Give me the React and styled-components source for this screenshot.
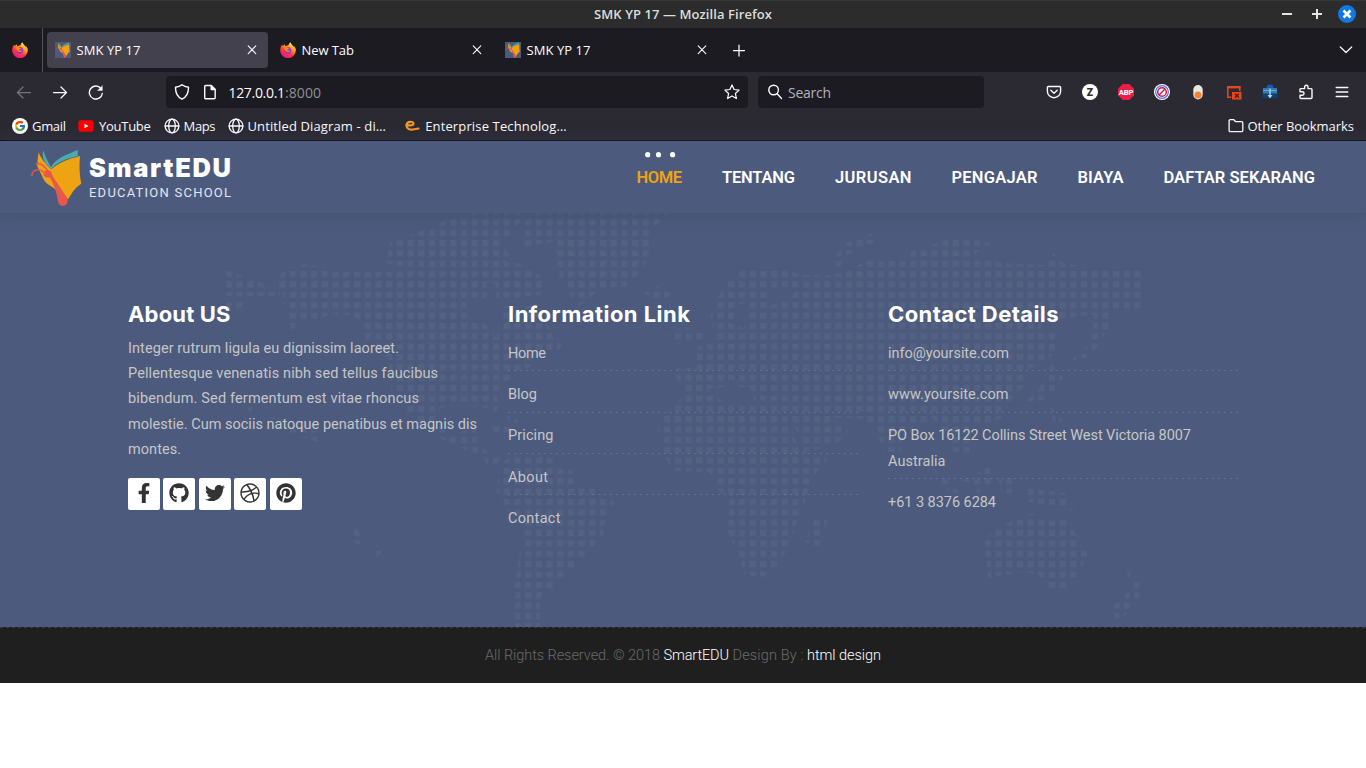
import React, { useLayoutEffect, useRef, useState } from "react";
import styled, { createGlobalStyle, css } from "styled-components";
import { FaFacebookF, FaGithub, FaTwitter, FaDribbble, FaPinterest } from "react-icons/fa";
import { FcGoogle } from "react-icons/fc";

const GlobalStyle = createGlobalStyle`
  * { box-sizing: border-box; }
  html, body { margin: 0; height: 100%; background: #fff; overflow: hidden; }
  svg { display: block; flex: none; }
`;

const uiFont = `"Open Sans", "Noto Sans", sans-serif`;
const siteFont = `Roboto, "Liberation Sans", sans-serif`;
const displayFont = `Inter, Roboto, sans-serif`;
const navy = "#4c5a7d";

/* Text tracked so that it fills a given measure */
const Measure = styled.span`
  display: inline-block;
  flex: none;
  width: ${(p) => p.$w}px;
  white-space: pre;
  ${(p) => p.$color && css`color: ${p.$color};`}
`;

function Fit({ w, color, children }) {
  const ref = useRef(null);
  const [spacing, setSpacing] = useState(0);
  useLayoutEffect(() => {
    const natural = ref.current.getBoundingClientRect().width;
    setSpacing((w - natural) / Math.max(1, children.length - 1));
  }, [w, children]);
  return (
    <Measure $w={w} $color={color}>
      <span ref={ref} style={{ letterSpacing: spacing }}>{children}</span>
    </Measure>
  );
}

/* ---------- window chrome ---------- */
const Window = styled.div`
  width: 1366px;
  height: 768px;
  display: flex;
  flex-direction: column;
  background: #fff;
`;

const TitleBar = styled.div`
  height: 28px;
  display: grid;
  grid-template-columns: 1fr auto 1fr;
  align-items: start;
  padding-top: 4px;
  background: #2c2c2c;
  border-top: 1px solid #383838;
  font: 600 13px/18px ${uiFont};
  color: #dcdcdc;
`;

const WindowButtons = styled.div`
  justify-self: end;
  display: flex;
  gap: 12px;
  padding-right: 10px;
`;

const TabStrip = styled.div`
  height: 44px;
  display: flex;
  align-items: center;
  background: #1c1b22;
  font: 13px/18px ${uiFont};
  color: #fbfbfe;
`;

const PinnedTab = styled.div`
  width: 43px;
  height: 44px;
  padding: 14px 0 0 12px;
  border-right: 1px solid #54535c;
  margin-right: 4px;
`;

const Tab = styled.div`
  width: 221px;
  height: 36px;
  margin-right: 4px;
  padding: 0 8px;
  display: flex;
  align-items: center;
  gap: 5.5px;
  border-radius: 4px;
  background: ${(p) => (p.$active ? "#42414d" : "transparent")};
  & > :last-child { margin-left: auto; }
`;

const StripButton = styled.div`
  display: flex;
  margin-left: ${(p) => p.$ml || "0"};
  margin-right: ${(p) => p.$mr || "0"};
`;

const NavBar = styled.div`
  height: 40px;
  display: flex;
  align-items: center;
  background: #2b2a33;
  padding-left: 16px;
  font: 14px/20px ${uiFont};
`;

const NavButtons = styled.div`
  display: flex;
  gap: 20px;
  width: 150px;
`;

const Field = styled.div`
  height: 32px;
  width: ${(p) => p.$w}px;
  margin-right: 10px;
  padding: 0 8px;
  display: flex;
  align-items: center;
  border-radius: 4px;
  background: #1c1b22;
  color: #fbfbfe;
`;

const FieldText = styled.div`
  display: flex;
  padding-top: 2px;
`;

const FieldIcon = styled.div`
  margin-right: ${(p) => p.$mr}px;
`;

const FieldEnd = styled.div`
  margin-left: auto;
`;

const Extensions = styled.div`
  display: flex;
  gap: 20px;
  margin-left: auto;
  padding-right: 16px;
`;

const BookmarkBar = styled.div`
  height: 29px;
  display: flex;
  align-items: center;
  padding: 0 12px;
  background: #2b2a33;
  border-bottom: 1px solid #0c0c0d;
  font: 13px/18px ${uiFont};
  color: #fbfbfe;
`;

const Bookmark = styled.div`
  display: flex;
  align-items: center;
  gap: ${(p) => p.$gap || 4}px;
  margin-right: ${(p) => p.$mr || 0}px;
  margin-left: ${(p) => (p.$end ? "auto" : "0")};
`;

/* ---------- site ---------- */
const Header = styled.header`
  height: 72px;
  flex: none;
  z-index: 1;
  display: flex;
  justify-content: space-between;
  padding: 0 51px 0 30px;
  background: ${navy};
  box-shadow: 0 0 14px rgba(58, 66, 84, 0.55);
  font-family: ${siteFont};
`;

const Brand = styled.div`
  display: flex;
  gap: 7px;
  padding-top: 8px;
`;

const BrandText = styled.div`
  display: flex;
  flex-direction: column;
  color: #fff;
`;

const BrandName = styled.div`
  font-family: ${displayFont};
  font-size: 25.5px;
  font-weight: 900;
  line-height: 30px;
  margin-top: 4px;
`;

const BrandTag = styled.div`
  font-size: 13px;
  line-height: 16px;
  color: #e3e6ee;
  margin-top: 2px;
`;

const Menu = styled.nav`
  display: flex;
  gap: 40px;
  padding-top: 11px;
  font-size: 16.5px;
  font-weight: 600;
  line-height: 20px;
  color: #fff;
`;

const MenuItem = styled.div`
  display: flex;
  flex-direction: column;
  justify-content: flex-start;
  ${(p) => p.$active && css`color: #eea412;`}
`;

const Dots = styled.div`
  height: 16px;
  padding-left: 8px;
`;

const Footer = styled.footer`
  height: 414px;
  flex: none;
  display: grid;
  background: ${navy};
  font-family: ${siteFont};
  & > * { grid-area: 1 / 1; }
`;

const Columns = styled.div`
  display: grid;
  grid-template-columns: repeat(3, 350px);
  column-gap: 30px;
  align-content: start;
  padding: 88px 128px 0;
  z-index: 0;
  color: #c6c6c6;
  font-size: 14.5px;
  line-height: 25.2px;
`;

const Heading = styled.h3`
  margin: 0;
  padding-bottom: 1px;
  font-family: ${displayFont};
  font-size: 22px;
  font-weight: 700;
  line-height: 26px;
  color: #fff;
`;

const About = styled.p`
  margin: 8px 0 16px;
  display: flex;
  flex-direction: column;
`;

const Links = styled.ul`
  list-style: none;
  margin: 13px 0 0;
  padding: 0;
`;

const LinkRow = styled.li`
  display: flex;
  flex-direction: column;
  padding-bottom: 5.2px;
  margin-bottom: 10.8px;
  background: repeating-linear-gradient(90deg, rgba(255, 255, 255, 0.12) 0 2.5px, transparent 2.5px 6px) left bottom / 100% 1px no-repeat;
  &:last-child { background: none; }
`;

const Socials = styled.div`
  display: flex;
  gap: 3.4px;
`;

const Social = styled.div`
  width: 32px;
  height: 32px;
  padding-bottom: 2px;
  display: flex;
  align-items: center;
  justify-content: center;
  border-radius: 2px;
  background: #fff;
  color: #333;
  font-size: 20px;
`;

const Copyright = styled.div`
  height: 56px;
  flex: none;
  display: flex;
  justify-content: center;
  gap: 3.5px;
  padding-top: 16px;
  background: repeating-linear-gradient(90deg, #3a3a3a 0 3px, transparent 3px 6px) left top / 100% 1px no-repeat, #1f1f1f;
  font: 300 14.5px/25px ${siteFont};
  color: #6b6b6b;
`;

/* ---------- drawings ---------- */
const Stroke = ({ size = 16, w = 1.25, color = "#fbfbfe", children }) => (
  <svg width={size} height={size} viewBox="0 0 16 16" fill="none" stroke={color} strokeWidth={w} strokeLinecap="round" strokeLinejoin="round">
    {children}
  </svg>
);

const Close = () => <Stroke w={1.1}><path d="M4.2 3.8l7.6 7.8M11.8 3.8L4.2 11.6" /></Stroke>;
const Globe = () => (
  <Stroke w={1.3}>
    <circle cx="8" cy="8" r="6.9" />
    <ellipse cx="8" cy="8" rx="3.3" ry="6.9" />
    <path d="M1.2 8h13.6" />
  </Stroke>
);

const Firefox = ({ id }) => (
  <svg width="16" height="16" viewBox="0 0 16 16">
    <defs>
      <linearGradient id={`${id}f`} x1=".8" y1=".05" x2=".25" y2=".95">
        <stop offset="0" stopColor="#fff44f" />
        <stop offset=".35" stopColor="#ff980e" />
        <stop offset=".65" stopColor="#ff3647" />
        <stop offset="1" stopColor="#e31587" />
      </linearGradient>
      <linearGradient id={`${id}p`} x1=".6" y1="0" x2=".3" y2="1">
        <stop offset="0" stopColor="#b833e1" />
        <stop offset="1" stopColor="#5b3ee0" />
      </linearGradient>
    </defs>
    <path fill={`url(#${id}f)`} d="M15.3 6c-.4-1-1.100-1.900-1.800-2.300.5 1 .8 1.900.9 2.500C13.400 3.600 11.600 2.700 10.400.2c-.5.3-1.700 1.500-1.800 3-1 .1-2 .5-2.700 1.100-.8-.4-1.100-1.200-1-2C3.900 2.700 3.100 3.600 2.900 4.200 2.500 4 2.500 2.900 2.500 2.600 1.200 3.600.2 6 .2 8.300a7.800 7.800 0 0 0 15.600.2c.1-.8 0-1.700-.5-2.500z" />
    <circle cx="8.100" cy="8.300" r="3.200" fill={`url(#${id}p)`} />
    <path fill="#ff8a16" d="M3.600 5.500c1.500-.9 3.100-.6 3.900.3.700.1 1.300.2 1.300.7 0 .6-1.700.7-1.900 1.600.8 1 2.300.9 3.300.3-.6 1.700-3 2.100-4.400.8C5 8.300 4.500 6.800 3.600 5.500z" />
  </svg>
);

const Book = () => (
  <>
    <path fill="#eea412" d="M8.300 3.500C11 8 14 14 21 20l2 18C18 36 14 32.500 13 29L7.200 17z" />
    <path fill="#eea412" d="M21 37V20.500C29 13 39 10 50 7c-.8 9-.8 18 1.300 27.700-6 3.800-9.500 9-13 15.600z" />
    <path fill="#4bacb0" d="M13.300 1.300C15.500 8 18 13 20.900 18 28 7 40 5 47.700.8V7C38 9.500 28 12 21.300 20 14 14 11.500 8 13.300 1.300z" />
    <path fill="#e8574b" d="M13.600 23.500c1.500-2.800 6-3 7.700-.3.700 1.200.6 2.800 1.700 4.500L37 48.800c1.800 3.700 0 8-4 8.100-3.700.1-4.900-3.100-5.400-6.600C26.800 44 24 36 20 28.600c-2.600.4-5-.3-6.400-2.100z" />
    <path fill="none" stroke="#e8574b" strokeWidth="1.500" d="M2 27c-.6-6.200 7.500-8.300 12-3.500M5.700 15c5-2 9 2.500 13 8" />
  </>
);

const Logo = () => <svg width="52" height="58" viewBox="0 0 52 58"><Book /></svg>;
const Favicon = () => (
  <svg width="16" height="16" viewBox="0 0 16 16">
    <rect width="16" height="16" fill={navy} />
    <g transform="translate(1 .3) scale(.27)"><Book /></g>
  </svg>
);

const northAmerica = "M79 192L130 215 190 235 240 260 240 272H80zM79 282L132 290 130 305 79 312zM235 215L250 200 310 178 380 185 400 200H620V190L560 175 570 110 640 88 720 55 800 25H960V50L925 95 900 110 930 150 920 170 960 175 1025 215V270L965 275 935 285 890 280 885 235 860 235V280L800 285V320L830 350 860 360 890 400 895 370 910 300 960 310 1000 300 1020 330 1050 370 1085 415 1080 435 1030 440 1000 460V480L950 510 920 530 890 560 895 605 880 635 865 610 780 600 720 610V670L760 690 780 680 830 670V720L865 740 870 760 900 755 895 775 860 780 850 755 785 730 720 700 690 670 620 625V590L575 560 565 460 495 400 490 350 450 330 400 328 310 350 240 405 275 370 260 330 250 270 235 240zM920 620L960 655H925zM880 655L940 670V685L880 680z";
const greenland = "M975 50L1000 25H1410L1370 60 1350 90 1345 160 1310 220 1280 245 1200 250 1170 280 1130 310 1105 250 1080 220 1070 130 1060 110 975 125zM1330 260L1380 240 1420 265 1370 295z";
const southAmerica = "M900 775L950 745 1060 760V790L1120 795V840L1180 850 1245 895 1220 920 1210 990 1180 1025 1130 1080 1090 1115 1060 1120V1150L1020 1180V1265H945V1140L960 1040 975 1010V960L930 930 890 860zM460 970L470 970 480 985V1020L460 1010zM525 1015L548 1040 530 1058zM140 605H160L150 625zM210 635L300 660 350 680 355 712 270 685z";
const oldWorld = "M205 330L225 280 260 220 300 195 360 185 480 210 540 212 600 200 660 165 790 170 785 140 920 95 1020 115 960 155 1060 175 1180 180 1200 145 1230 175 1320 190 1455 195V310L1370 325 1360 370 1310 455 1250 468 1310 410 1320 330 1260 335 1170 350 1160 385 1205 385V440L1180 470 1110 500 1120 540 1080 580 1050 640 970 665V745L910 740 890 680 850 640 830 650 760 680V740L710 740 680 670 650 640 560 640 605 680 570 720 480 740 545 760 500 820 485 870 460 940 430 1030 395 1085 360 1115 305 1110 290 1060 255 980 260 880 230 860 200 800 100 798 60 740 50 650 100 600 130 570 135 545 105 520V490H165V430L220 400 205 350zM195 552L250 545 262 520 280 548 320 545 330 585 425 590 420 600 340 604 235 585zM422 620L440 640 478 735 455 715zM405 245L465 248 430 280 385 300 365 270zM285 300L318 290 312 345 300 370 265 355z";
const islands = "M82 390L130 365 185 385V405L120 415 100 420zM480 1010L500 945H545L522 1025zM570 150L600 115 670 85 680 110 600 150 585 185 570 185zM1195 475L1230 520 1180 585 1120 590 1160 550zM1190 600L1230 650 1200 650zM850 790L900 830 930 865H895zM930 830L1015 785 1020 840 980 865 970 830zM1040 820H1082V865H1050zM1125 850L1240 865 1260 918 1130 890zM1000 1000L1060 960 1090 940 1140 925 1200 950 1215 930 1240 930 1265 990 1300 1050 1270 1110 1240 1150H1190L1160 1110 1110 1100 1010 1120zM1408 1085L1450 1130V1180L1400 1243 1380 1243 1375 1200 1432 1150z";

const WorldMap = () => (
  <svg width="1366" height="414" viewBox="0 213 1366 414">
    <defs>
      <pattern id="squares" patternUnits="userSpaceOnUse" x="225.700" y="219.300" width="10.690" height="10.360">
        <rect width="6.200" height="6" fill="#eeffee" fillOpacity=".047" />
      </pattern>
      <clipPath id="land">
        {[northAmerica, greenland, southAmerica].map((d) => (
          <path key={d} d={d} transform="translate(200 205) scale(.33333)" />
        ))}
        {[oldWorld, islands].map((d) => (
          <path key={d} d={d} clipRule="evenodd" transform="translate(640 205) scale(.34435 .33333)" />
        ))}
      </clipPath>
    </defs>
    <rect y="213" width="1366" height="414" fill="url(#squares)" clipPath="url(#land)" />
  </svg>
);

const menu = [["HOME", 45.5], ["TENTANG", 73], ["JURUSAN", 76.500], ["PENGAJAR", 86], ["BIAYA", 46], ["DAFTAR SEKARANG", 151.500]];
const about = [
  ["Integer rutrum ligula eu dignissim laoreet.", 271],
  ["Pellentesque venenatis nibh sed tellus faucibus", 310],
  ["bibendum. Sed fermentum est vitae rhoncus", 291],
  ["molestie. Cum sociis natoque penatibus et magnis dis", 349],
  ["montes.", 53],
];
const info = [["Home", 38], ["Blog", 29], ["Pricing", 45.500], ["About", 40], ["Contact", 52.500]];
const contact = [
  [["info@yoursite.com", 121]],
  [["www.yoursite.com", 120.500]],
  [["PO Box 16122 Collins Street West Victoria 8007", 303], ["Australia", 57.500]],
  [["+61 3 8376 6284", 108]],
];
const socials = [FaFacebookF, FaGithub, FaTwitter, FaDribbble, FaPinterest];

export default function App() {
  return (
    <Window>
      <GlobalStyle />
      <TitleBar>
        <span />
        <Fit w={178}>SMK YP 17 — Mozilla Firefox</Fit>
        <WindowButtons>
          <svg width="18" height="18"><path d="M4 9h10" stroke="#e4e4e4" strokeWidth="2" /></svg>
          <svg width="18" height="18"><path d="M4 9h10M9 4v10" stroke="#e4e4e4" strokeWidth="2" /></svg>
          <svg width="18" height="18">
            <circle cx="9" cy="9" r="9" fill="#1177e3" />
            <path d="M5.500 5.500l7 7M12.500 5.500l-7 7" stroke="#fff" strokeWidth="2.600" />
          </svg>
        </WindowButtons>
      </TitleBar>

      <TabStrip>
        <PinnedTab><Firefox id="a" /></PinnedTab>
        <Tab $active><Favicon /><Fit w={64}>SMK YP 17</Fit><Close /></Tab>
        <Tab><Firefox id="b" /><Fit w={52.5}>New Tab</Fit><Close /></Tab>
        <Tab><Favicon /><Fit w={64}>SMK YP 17</Fit><Close /></Tab>
        <StripButton $ml="9px"><Stroke><path d="M2.500 8.500h11M8 3v11" /></Stroke></StripButton>
        <StripButton $ml="auto" $mr="12px"><Stroke><path d="M2.300 5L8 10.500 13.700 5" /></Stroke></StripButton>
      </TabStrip>

      <NavBar>
        <NavButtons>
          <Stroke color="#76757d"><path d="M14.500 8.500H1.500M7 3L1.500 8.500 7 14" /></Stroke>
          <Stroke><path d="M1.500 8.500h13M9 3l5.500 5.500L9 14" /></Stroke>
          <Stroke w={1.400}><path d="M14.300 9.500A6.500 6.500 0 1 1 12.800 4.300" /><path d="M14.300 2v4.600H9.700z" fill="#fbfbfe" strokeWidth=".4" /></Stroke>
        </NavButtons>
        <Field $w={582}>
          <FieldIcon $mr={12}><Stroke w={1.400}><path d="M8 .8c2 1.700 4.300 2.300 6.500 2.500C14.600 9 12.700 12.900 8 15.200 3.300 12.900 1.400 9 1.500 3.300 3.700 3.100 6 2.500 8 .8z" /></Stroke></FieldIcon>
          <FieldIcon $mr={10.500}><Stroke w={1.400}><path d="M3.800 1.500h5.400l4 4v8.200a1.100 1.100 0 0 1-1.100 1.100H3.800a1.100 1.100 0 0 1-1.100-1.100V2.600a1.100 1.100 0 0 1 1.100-1.100z" /><path d="M9.200 1.700v3.800H13z" fill="#fbfbfe" /></Stroke></FieldIcon>
          <FieldText>
            <Fit w={56.5}>127.0.0.1</Fit>
            <Fit w={36} color="#8f8f97">:8000</Fit>
          </FieldText>
          <FieldEnd><Stroke><path d="M8 .9l2.100 4.600 5 .6-3.700 3.400 1 5L8 12l-4.400 2.500 1-5L.9 6.100l5-.6z" /></Stroke></FieldEnd>
        </Field>
        <Field $w={226}>
          <FieldIcon $mr={6}><Stroke w={1.400}><circle cx="7.600" cy="6" r="4.800" /><path d="M11.200 9.800l4.300 4.700" /></Stroke></FieldIcon>
          <FieldText><Fit w={43} color="#b4b4b9">Search</Fit></FieldText>
        </Field>
        <Extensions>
          <Stroke w={1.400}><path d="M2.300 2.500h11.400c.5 0 .9.400.9.900v3.800a6.600 6.600 0 0 1-13.200 0V3.400c0-.5.4-.9.9-.9z" /><path d="M4.800 6.300L8 9.300l3.200-3" /></Stroke>
          <svg width="16" height="16">
            <circle cx="8" cy="8" r="8" fill="#fff" />
            <text x="8" y="11.600" fill="#2c2b35" fontSize="10" fontWeight="800" textAnchor="middle" fontFamily="Inter, sans-serif">Z</text>
          </svg>
          <svg width="16" height="16">
            <path d="M4.700 0h6.600L16 4.700v6.600L11.300 16H4.700L0 11.300V4.700z" fill="#ed1e45" />
            <text x="8" y="10.800" fill="#fff" fontSize="7.600" fontWeight="800" textAnchor="middle" letterSpacing="-.2" fontFamily="Roboto, sans-serif">ABP</text>
          </svg>
          <svg width="16" height="16" fill="none">
            <circle cx="8" cy="8" r="8" fill="#fff" />
            <circle cx="8" cy="8" r="6.300" stroke="#5570d5" strokeWidth="1.200" />
            <circle cx="8" cy="8" r="4.300" stroke="#d4144a" strokeWidth="1.500" />
            <path d="M5 11l6-6" stroke="#d4144a" strokeWidth="1.500" />
          </svg>
          <svg width="16" height="16"><rect x="3.300" y="1" width="9.400" height="14.500" rx="4.700" fill="#e8e6e3" /><circle cx="8" cy="11" r="3.500" fill="#f58232" /></svg>
          <svg width="16" height="16">
            <path d="M1.800 2.800h12v10.400h-12z" fill="none" stroke="#ef4418" strokeWidth="1.500" />
            <path d="M1 2h13.500v2.400H1z" fill="#ef4418" />
            <path d="M5.200 7.200h10.300v8.300H5.200z" fill="#2b2a33" />
            <path d="M6 8h9.500v7.500H6z" fill="#ef4418" />
            <path d="M8.900 9.800l4 4M12.900 9.800l-4 4" stroke="#3b2428" strokeWidth="1.400" />
          </svg>
          <svg width="16" height="16">
            <path d="M.3 8.500h15.400v5.500H.3z" fill="#0b4275" />
            <path d="M1 4h14v5.500H1z" fill="#3579a8" />
            <path d="M4.500 4a3.500 3.500 0 0 1 7 0z" fill="#1756c8" />
            <path d="M1 6.500h14" stroke="#6ba9ca" />
            <path d="M7.300 4.500h1.400v6.500h1.800L8 14.500 5.500 11h1.800z" fill="#a9d5ea" />
          </svg>
          <Stroke w={1.400}><path d="M3.900 4.600h2.700V2.900a1.700 1.700 0 0 1 3.400 0v1.700h3.100c.5 0 .9.400.9.900v8.100c0 .5-.4.900-.9.900H2.900c-.5 0-.9-.4-.9-.9v-2.300h2.300a1.700 1.700 0 0 0 0-3.500H2" /><path d="M3.900 4.600H2.900c-.5 0-.9.4-.9.900v1.800" /></Stroke>
          <Stroke w={1.400}><path d="M2.200 3.500h11.600M2.200 8h11.600M2.200 12.500h11.600" /></Stroke>
        </Extensions>
      </NavBar>

      <BookmarkBar>
        <Bookmark $mr={12} $gap={4}>
          <svg width="16" height="16"><circle cx="8" cy="8" r="8" fill="#fff" /><FcGoogle x="2" y="2" size={12} /></svg>
          <Fit w={34}>Gmail</Fit>
        </Bookmark>
        <Bookmark $mr={12.700} $gap={4.900}>
          <svg width="16" height="16"><rect x=".3" y="2.200" width="15.400" height="11.600" rx="3" fill="#f00" /><path d="M6.500 5.700L10.500 8l-4 2.300z" fill="#fff" /></svg>
          <Fit w={52}>YouTube</Fit>
        </Bookmark>
        <Bookmark $mr={12.700} $gap={4}><Globe /><Fit w={32}>Maps</Fit></Bookmark>
        <Bookmark $mr={18.700} $gap={3.200}><Globe /><Fit w={138.5}>Untitled Diagram - di…</Fit></Bookmark>
        <Bookmark $gap={4.500}>
          <Stroke color="#f59a23" w={2.2}><path d="M2.500 7.300c3 .2 6 .1 6-1.600C8.500 4.200 7 3.600 5 3.800 2.600 4.200 1.300 5.900 1.500 8c.3 2.800 3.500 3.900 6.200 3.500 2-.2 3.500-.4 5.800-1" /></Stroke>
          <Fit w={141.5}>Enterprise Technolog…</Fit>
        </Bookmark>
        <Bookmark $end $gap={3.500}>
          <Stroke w={1.300}><path d="M2.300 1.700h3.500l1.900 2h5.900c.7 0 1.200.5 1.200 1.200v7.500c0 .7-.5 1.200-1.200 1.200H2.300c-.7 0-1.200-.5-1.200-1.200V2.900c0-.7.5-1.200 1.200-1.200z" /></Stroke>
          <Fit w={106.5}>Other Bookmarks</Fit>
        </Bookmark>
      </BookmarkBar>

      <Header>
        <Brand>
          <Logo />
          <BrandText>
            <BrandName><Fit w={142}>SmartEDU</Fit></BrandName>
            <BrandTag><Fit w={142}>EDUCATION SCHOOL</Fit></BrandTag>
          </BrandText>
        </Brand>
        <Menu>
          {menu.map(([label, w], i) => (
            <MenuItem key={label} $active={i === 0}>
              <Dots>
                {i === 0 && (
                  <svg width="36" height="6" fill="#fff"><circle cx="2.700" cy="2.700" r="2.600" /><circle cx="13.500" cy="2.700" r="2.600" /><circle cx="27.600" cy="2.700" r="2.600" /></svg>
                )}
              </Dots>
              <Fit w={w}>{label}</Fit>
            </MenuItem>
          ))}
        </Menu>
      </Header>

      <Footer>
        <WorldMap />
        <Columns>
          <div>
            <Heading><Fit w={102.5}>About US</Fit></Heading>
            <About>{about.map(([t, w]) => <Fit key={t} w={w}>{t}</Fit>)}</About>
            <Socials>{socials.map((Icon, i) => <Social key={i}><Icon /></Social>)}</Socials>
          </div>
          <div>
            <Heading><Fit w={182}>Information Link</Fit></Heading>
            <Links>{info.map(([t, w]) => <LinkRow key={t}><Fit w={w}>{t}</Fit></LinkRow>)}</Links>
          </div>
          <div>
            <Heading><Fit w={170.5}>Contact Details</Fit></Heading>
            <Links>
              {contact.map((lines) => (
                <LinkRow key={lines[0][0]}>{lines.map(([t, w]) => <Fit key={t} w={w}>{t}</Fit>)}</LinkRow>
              ))}
            </Links>
          </div>
        </Columns>
      </Footer>

      <Copyright>
        <Fit w={175}>All Rights Reserved. © 2018</Fit>
        <Fit w={65.5} color="#fff">SmartEDU</Fit>
        <Fit w={71}>Design By :</Fit>
        <Fit w={74} color="#fff">html design</Fit>
      </Copyright>
    </Window>
  );
}
